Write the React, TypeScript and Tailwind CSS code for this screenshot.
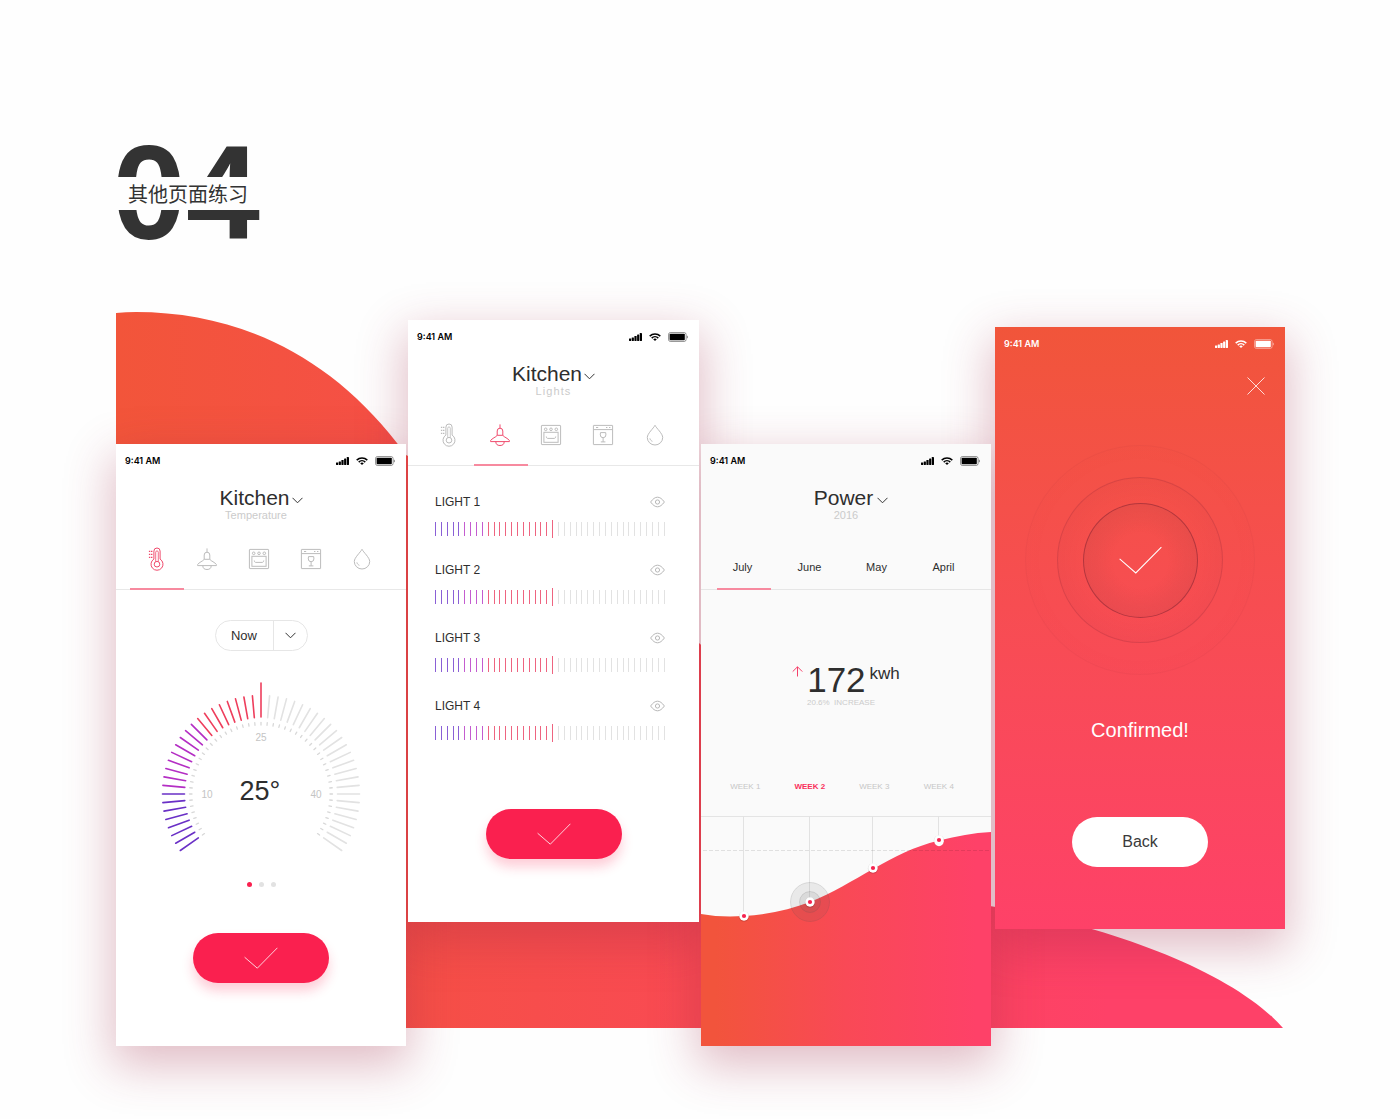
import type { ReactNode } from "react";

const SANS = "font-['Liberation_Sans',Arial,sans-serif]";

/* ---------- icons ---------- */

function StatusIcons() {
  return (
    <div className="flex items-center gap-[7px]" aria-hidden="true">
      <svg width="13" height="8" viewBox="0 0 13 8" fill="currentColor">
        <rect x="0" y="5.4" width="2.2" height="2.6" rx=".4" />
        <rect x="2.7" y="4.4" width="2.2" height="3.6" rx=".4" />
        <rect x="5.4" y="3" width="2.2" height="5" rx=".4" />
        <rect x="8.1" y="1.5" width="2.2" height="6.5" rx=".4" />
        <rect x="10.8" y="0" width="2.2" height="8" rx=".4" />
      </svg>
      <svg width="12" height="8" viewBox="0 0 12 8" fill="none" stroke="currentColor" strokeWidth="1.5">
        <path d="M.7 3.1a7.6 7.6 0 0 1 10.6 0" />
        <path d="M2.7 5.1a4.7 4.7 0 0 1 6.6 0" />
        <path d="M6 8 4.2 6.3a2.6 2.6 0 0 1 3.6 0z" fill="currentColor" stroke="none" />
      </svg>
      <svg width="20" height="10" viewBox="0 0 20 10">
        <rect x=".5" y=".5" width="17.6" height="9" rx="2" fill="none" stroke="currentColor" strokeOpacity=".4" />
        <rect x="1.6" y="1.7" width="15.2" height="6.6" rx=".8" fill="currentColor" />
        <path d="M18.8 3.4c.8.3 1.1.9 1.1 1.6s-.3 1.3-1.1 1.6z" fill="currentColor" fillOpacity=".5" />
      </svg>
    </div>
  );
}

function Chevron() {
  return (
    <svg width="11" height="7" viewBox="0 0 11 7" fill="none" stroke="#333" aria-hidden="true">
      <path d="M.5 .8 5.5 5.8 10.5 .8" />
    </svg>
  );
}

function Check({ className }: { className: string }) {
  return (
    <svg className={className} viewBox="0 0 34 22" fill="none" stroke="#fff" strokeWidth=".8" aria-hidden="true">
      <path d="M.6 10.2 13.3 21.2 33.4 .8" />
    </svg>
  );
}

function IconFrame({ children }: { children: ReactNode }) {
  return (
    <svg width="24" height="24" viewBox="0 0 24 24" fill="none" stroke="currentColor" strokeWidth="1" aria-hidden="true">
      {children}
    </svg>
  );
}

const ThermometerIcon = () => (
  <IconFrame>
    <path d="M9.9 12.1V4.1a3.1 3.1 0 0 1 6.2 0v8a6 6 0 1 1-6.2 0z" />
    <path d="M11.7 14.6V5.2a1.3 1.3 0 0 1 2.6 0v9.4" strokeWidth=".8" />
    <circle cx="13" cy="17.2" r="2.8" />
    <path d="M4.9 4.3h1.4M7 4.3h1.4M4.9 7.3h1.4M7 7.3h1.4M4.9 10.3h1.4M7 10.3h1.4" strokeWidth="1.2" />
  </IconFrame>
);

const LampIcon = () => (
  <IconFrame>
    <path d="M12 1.4v3.8" />
    <path d="M9.2 12.300V8a2.800 2.800 0 0 1 5.600 0v4.300z" />
    <path d="M9.200 12.300C7.800 14.400 4.200 15 2.600 17.600v1h18.800v-1C19.800 15 16.200 14.400 14.800 12.300" />
    <path d="M7.8 18.6a4.2 3.9 0 0 0 8.400 0" />
  </IconFrame>
);

const OvenIcon = () => (
  <IconFrame>
    <rect x="2.4" y="2.4" width="19.2" height="19.2" rx=".6" />
    <circle cx="6.7" cy="6.3" r="1.3" />
    <circle cx="12" cy="6.3" r="1.3" />
    <circle cx="17.3" cy="6.3" r="1.3" />
    <rect x="4.9" y="9.3" width="14.2" height="10" />
    <path d="M7.3 13.5c0 1.2.6 1.9 1.6 1.9h6.2c1 0 1.6-.7 1.6-1.9" />
  </IconFrame>
);

const DishwasherIcon = () => (
  <IconFrame>
    <rect x="2.4" y="2.4" width="19.2" height="19.2" rx=".3" />
    <path d="M2.4 6.6h19.2M5 4.5h2.2M15 4.5h1.4M18 4.5h1.4" />
    <path d="M9.5 9.6h5.2l.2 2.3a2.8 2.8 0 0 1-5.6 0z" />
    <path d="M12.1 14.7v4.2M9.8 18.9h4.6" />
  </IconFrame>
);

const DropIcon = () => (
  <IconFrame>
    <path d="M12 2.3C10.6 5.2 4.3 10.6 4.3 14.5a7.7 7.5 0 0 0 15.4 0C19.7 10.6 13.4 5.2 12 2.3z" />
    <path d="M6.9 15.4c.3 1.400 1.100 2.300 2.500 2.900" />
  </IconFrame>
);

const EyeIcon = () => (
  <svg width="15" height="12" viewBox="0 0 15 12" fill="none" stroke="#b8b8b8" aria-hidden="true">
    <path d="M.6 6C3 2.7 5.2 1.200 7.500 1.200S12 2.700 14.400 6C12 9.300 9.800 10.800 7.500 10.800S3 9.300 .6 6z" />
    <circle cx="7.5" cy="6" r="2.1" />
  </svg>
);

/* ---------- shared pieces ---------- */

function Phone({ surface, place, children }: { surface: string; place: string; children: ReactNode }) {
  return (
    <article className={`relative ${place}`}>
      <div className="absolute inset-0 shadow-[0_16px_44px_4px_rgba(160,40,70,0.3)]" />
      <div className={`relative z-10 flex h-full min-h-[602px] flex-col ${surface}`}>
        <div className="flex h-[33px] shrink-0 items-center justify-between pl-[9px] pr-[11px]">
          <span className="font-['Inter',sans-serif] text-[9px] font-semibold leading-3">9:41 AM</span>
          <StatusIcons />
        </div>
        {children}
      </div>
    </article>
  );
}

function Title({ name, sub, nameClass = "", subClass = "" }: { name: string; sub: string; nameClass?: string; subClass?: string }) {
  return (
    <header className="mt-[9px] text-center">
      <h2 className={`flex items-center justify-center text-[21px] leading-6 text-[#2e2e2e] ${nameClass}`}>
        {name}
        <button type="button" aria-label={`Change ${name}`} className="ml-0.5 mt-1">
          <Chevron />
        </button>
      </h2>
      <p className={`text-[11px] leading-[11px] text-[#cbcbcb] ${subClass}`}>{sub}</p>
    </header>
  );
}

const DEVICES = [
  { label: "Temperature", Icon: ThermometerIcon },
  { label: "Lights", Icon: LampIcon },
  { label: "Oven", Icon: OvenIcon },
  { label: "Dishwasher", Icon: DishwasherIcon },
  { label: "Water", Icon: DropIcon },
];

function DeviceTabs({ active }: { active: string }) {
  return (
    <nav className="mt-[7px] grid h-[62px] shrink-0 grid-cols-5 border-b border-[#e8e8e8] pl-[14px] pr-[18px]">
      {DEVICES.map(({ label, Icon }) => (
        <button
          key={label}
          type="button"
          aria-label={label}
          className={`relative flex items-center justify-center ${label === active ? "text-[#f04a6c]" : "text-[#bcbcbc]"}`}
        >
          <Icon />
          {label === active && <span className="absolute -bottom-px left-0 h-0.5 w-[54px] bg-[#f78a9f]" />}
        </button>
      ))}
    </nav>
  );
}

function ConfirmButton() {
  return (
    <button
      type="button"
      aria-label="Confirm"
      className="mx-auto mb-[63px] mt-auto flex h-[50px] w-[136px] shrink-0 items-center justify-center rounded-full bg-[#fa204f] shadow-[0_8px_12px_rgba(250,32,79,0.22)]"
    >
      <Check className="h-[22px] w-[34px]" />
    </button>
  );
}

/* ---------- temperature ---------- */

function Dial() {
  const ticks = Array.from({ length: 51 }, (_, i) => -125 + i * 5);
  const colour = (a: number) => (a > 0 ? "#e2e2e2" : a > -45 ? "#ee3e5c" : a > -90 ? "#b42ec4" : "#6a30c6");
  return (
    <svg className="mx-auto mt-[31px] w-[224px]" viewBox="0 0 224 176" role="img" aria-label="25 degrees">
      <g transform="translate(112 112)" strokeLinecap="round">
        {ticks.map((a) => (
          <g key={a} transform={`rotate(${a})`}>
            <path d={a === 0 ? "M0 -77V-111" : "M0 -76.500V-98.500"} stroke={colour(a)} strokeWidth="1.600" />
            <path d="M0 -69V-71.500" stroke="#d8d8d8" strokeWidth="1.300" />
          </g>
        ))}
      </g>
      <g className={SANS} fontSize="10" fill="#c4c4c4" textAnchor="middle">
        <text x="112" y="59">25</text>
        <text x="58" y="116">10</text>
        <text x="167" y="116">40</text>
      </g>
      <text className={SANS} x="111" y="118" fontSize="27" fill="#2e2e2e" textAnchor="middle">25°</text>
    </svg>
  );
}

function TemperatureScreen() {
  return (
    <Phone surface="bg-white text-black" place="xl:mt-[132px]">
      <Title name="Kitchen" sub="Temperature" subClass="pr-2.5" />
      <DeviceTabs active="Temperature" />
      <div className="mx-auto mt-[30px] flex h-[31px] w-[93px] shrink-0 rounded-full border border-[#e6e6e6]">
        <button type="button" className="flex-1 text-[13px] leading-4 text-[#2e2e2e]">Now</button>
        <button type="button" aria-label="Choose time" className="flex w-[34px] items-center justify-center border-l border-[#e6e6e6]">
          <Chevron />
        </button>
      </div>
      <Dial />
      <div className="mt-6 flex justify-center gap-[7px]">
        <span className="size-[5px] rounded-full bg-[#fa204f]" />
        <span className="size-[5px] rounded-full bg-[#e2e2e2]" />
        <span className="size-[5px] rounded-full bg-[#e2e2e2]" />
      </div>
      <ConfirmButton />
    </Phone>
  );
}

/* ---------- lights ---------- */

function tickClass(i: number) {
  if (i < 5) return "h-3.5 bg-[#8a60d6]";
  if (i < 9) return "h-3.5 bg-[#c45cd0]";
  if (i < 20) return "h-3.5 bg-[#ee6480]";
  if (i === 20) return "h-[18px] bg-[#ee6480]";
  return "h-3.5 bg-[#e2e2e2]";
}

function LightRow({ name }: { name: string }) {
  const id = name.toLowerCase().replace(" ", "-");
  return (
    <div>
      <div className="flex h-4 items-center justify-between">
        <label htmlFor={id} className="text-[12px] leading-4 text-[#2e2e2e]">{name}</label>
        <button type="button" aria-label={`Toggle ${name}`}>
          <EyeIcon />
        </button>
      </div>
      <div className="relative mt-2.5 flex h-[18px] items-center justify-between">
        {Array.from({ length: 40 }, (_, i) => (
          <span key={i} className={`w-px ${tickClass(i)}`} />
        ))}
        <input id={id} type="range" min="0" max="39" defaultValue="20" className="absolute inset-0 w-full opacity-0" />
      </div>
    </div>
  );
}

function LightsScreen() {
  return (
    <Phone surface="bg-white text-black" place="xl:mt-2">
      <Title name="Kitchen" sub="Lights" subClass="tracking-widest" />
      <DeviceTabs active="Lights" />
      <div className="mt-7 flex flex-col gap-6 pl-[27px] pr-[34px]">
        {["LIGHT 1", "LIGHT 2", "LIGHT 3", "LIGHT 4"].map((n) => (
          <LightRow key={n} name={n} />
        ))}
      </div>
      <ConfirmButton />
    </Phone>
  );
}

/* ---------- power ---------- */

const POINTS = [
  { x: 43, y: 100 },
  { x: 109, y: 86 },
  { x: 172, y: 52 },
  { x: 238, y: 24 },
];

function UsageChart() {
  return (
    <svg className="block h-auto w-full" viewBox="0 0 290 230" role="img" aria-label="Weekly power use">
      <defs>
        <linearGradient id="usage" x1="0" x2="1" y1="0" y2="0">
          <stop offset=".05" stopColor="#f2543c" />
          <stop offset=".5" stopColor="#f94956" />
          <stop offset=".95" stopColor="#fe4168" />
        </linearGradient>
      </defs>
      <path d="M0 .5H290" stroke="#e4e4e4" />
      {POINTS.map((p) => (
        <path key={p.x} d={`M${p.x - 0.5} 0V${p.y}`} stroke="#e2e2e2" />
      ))}
      <path
        d="M0 98C14 100.500 28 101 43 100C68 98.500 90 93 109 86C131 77 152 64.500 172 53C194 40.500 212 31 238 24.500C256 20 272 17 290 16V230H0z"
        fill="url(#usage)"
      />
      <path d="M2 34.500H290" stroke="#000" strokeOpacity=".1" strokeDasharray="4 2" />
      <circle cx="109" cy="86" r="19.500" fill="#555" fillOpacity=".1" stroke="#555" strokeOpacity=".2" strokeWidth=".8" />
      <circle cx="109" cy="86" r="10.500" fill="#555" fillOpacity=".1" stroke="#555" strokeOpacity=".2" strokeWidth=".8" />
      {POINTS.map((p) => (
        <g key={p.x}>
          <circle cx={p.x} cy={p.y + 0.5} r="5.200" fill="#000" fillOpacity=".12" />
          <circle cx={p.x} cy={p.y} r="4.700" fill="#fff" />
          {p.y === 24 && <circle cx={p.x} cy={p.y + 1.5} r="4.700" fill="#fff" />}
          <circle cx={p.x} cy={p.y} r="2.100" fill="#f5234f" />
        </g>
      ))}
    </svg>
  );
}

function PowerScreen() {
  return (
    <Phone surface="bg-[#fafafa] text-black" place="xl:mt-[132px]">
      <Title name="Power" sub="2016" nameClass="gap-0.5 pl-2.5" />
      <nav className="mt-[7px] grid h-[62px] shrink-0 grid-cols-4 border-b border-[#e6e6e6] pl-2 pr-3.5">
        {["July", "June", "May", "April"].map((m, i) => (
          <button key={m} type="button" className="relative pt-4 text-[11px] leading-4 text-[#2e2e2e]">
            {m}
            {i === 0 && <span className="absolute -bottom-px left-2 h-0.5 w-[54px] bg-[#f78a9f]" />}
          </button>
        ))}
      </nav>
      <div className="mt-[70px] flex items-start justify-center">
        <svg className="mr-1 mt-1.5" width="11" height="11" viewBox="0 0 11 11" fill="none" stroke="#f5406a" aria-hidden="true">
          <path d="M5.500 10.500V.8M.7 5.600 5.500 .8l4.800 4.800" />
        </svg>
        <span className="text-[35px] leading-10 text-[#2e2e2e]">172</span>
        <span className="ml-1 mt-1 text-[17px] leading-5 text-[#2e2e2e]">kwh</span>
      </div>
      <p className="-mt-0.5 pr-2.5 text-center text-[8px] leading-[10px] text-[#cbcbcb]">20.6%&nbsp; INCREASE</p>
      <ol className="mb-6 mt-auto grid grid-cols-4 pl-3 pr-5 pt-6 text-center text-[8px] leading-[10px] text-[#c6c6c6]">
        <li>WEEK 1</li>
        <li className="font-bold text-[#f9305a]">WEEK 2</li>
        <li>WEEK 3</li>
        <li>WEEK 4</li>
      </ol>
      <UsageChart />
    </Phone>
  );
}

/* ---------- confirmation ---------- */

function ConfirmedScreen() {
  return (
    <Phone surface="bg-linear-to-b from-[#f1553a] to-[#fe4168] text-white" place="xl:ml-0.5 xl:mt-[15px]">
      <button type="button" aria-label="Close" className="mr-5 mt-[17px] self-end">
        <svg className="block" width="18" height="18" viewBox="0 0 18 18" stroke="#fff" strokeWidth=".8" aria-hidden="true">
          <path d="M.5 .5l17 17M17.500 .5l-17 17" />
        </svg>
      </button>
      <div className="mx-auto mt-[50px] grid size-[230px] shrink-0 place-items-center rounded-full border border-[#a03040]/8 bg-radial from-transparent from-60% to-[#a03040]/3 to-100%">
        <div className="grid size-[166px] place-items-center rounded-full border border-[#902838]/25 bg-radial from-transparent from-50% to-[#a03040]/5 to-70%">
          <div className="grid size-[115px] place-items-center rounded-full border border-[#802030]/50 bg-radial from-transparent from-35% to-[#a04040]/15 to-70%">
            <Check className="h-7 w-[45px]" />
          </div>
        </div>
      </div>
      <p className="mt-[43px] text-center text-[20px] leading-6">Confirmed!</p>
      <button
        type="button"
        className="mx-auto mb-[62px] mt-auto h-[50px] w-[136px] shrink-0 rounded-full bg-white text-[16px] leading-5 text-[#3a3a3a]"
      >
        Back
      </button>
    </Phone>
  );
}

/* ---------- page ---------- */

function Backdrop() {
  return (
    <svg
      className="absolute left-0 top-0 hidden h-[716px] w-full xl:block"
      viewBox="0 0 1169 716"
      preserveAspectRatio="none"
      aria-hidden="true"
    >
      <defs>
        <linearGradient id="backdrop" x1="0" x2="1" y1="0" y2="0">
          <stop offset="0" stopColor="#f2553a" />
          <stop offset=".5" stopColor="#f94a53" />
          <stop offset=".85" stopColor="#fe4168" />
        </linearGradient>
      </defs>
      <path
        d="M0 1Q10 0 20 0C120 0 212 42 281 131L290 143C390 190 490 240 583 331C680 420 780 520 874 594C1000 615 1120 662 1167 716H0z"
        fill="url(#backdrop)"
      />
    </svg>
  );
}

export default function App() {
  return (
    <main className={`min-h-screen bg-[#fefefe] px-6 pb-[73px] pt-[146px] xl:pl-[116px] xl:pr-[115px] ${SANS}`}>
      <header className="relative w-max text-[#333]">
        <p className="-ml-1 text-[133px] font-bold leading-[94px]">04</p>
        <div className="absolute inset-x-0 top-[31px] flex h-[33px] items-center bg-[#fefefe] pl-3">
          <h1 className="whitespace-nowrap font-['Noto_Sans_CJK_SC',sans-serif] text-[20px] leading-8">其他页面练习</h1>
        </div>
      </header>
      <section className="relative isolate mt-[72px] grid grid-cols-1 items-start gap-10 sm:grid-cols-2 xl:grid-cols-[290fr_291fr_290fr_292fr] xl:gap-[2px]">
        <Backdrop />
        <TemperatureScreen />
        <LightsScreen />
        <PowerScreen />
        <ConfirmedScreen />
      </section>
    </main>
  );
}
